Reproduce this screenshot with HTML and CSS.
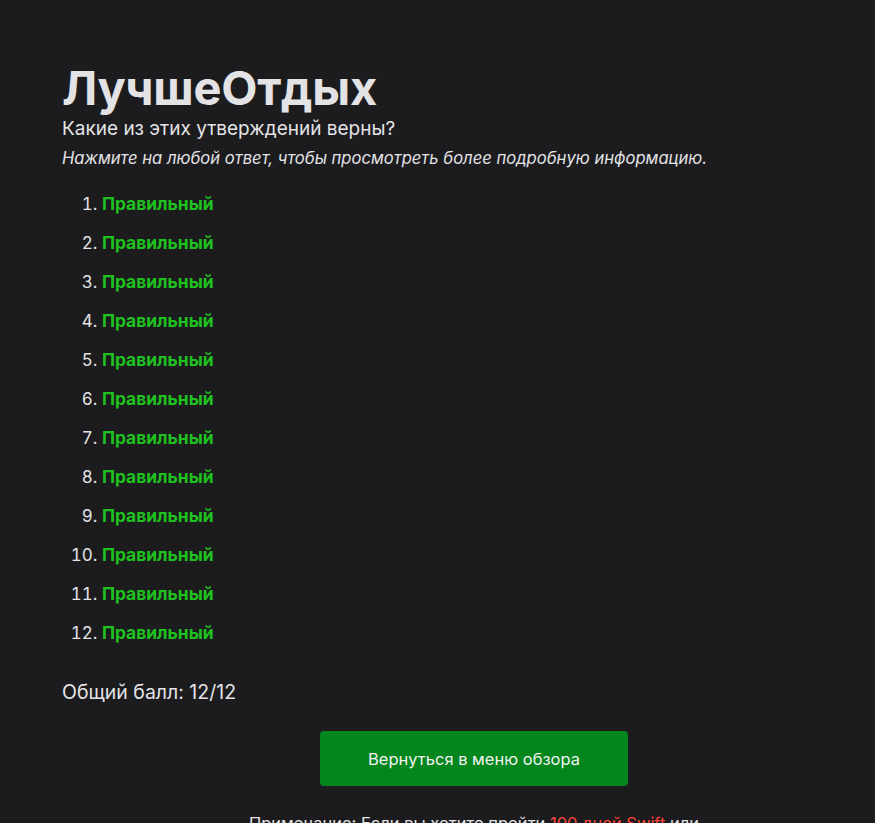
FILE: index.html
```html
<!DOCTYPE html>
<html lang="ru">
<head>
<meta charset="utf-8">
<title>ЛучшеОтдых</title>
<link rel="stylesheet" href="styles.css">
</head>
<body>
<main class="page">
  <h1 class="title">ЛучшеОтдых</h1>
  <p class="question">Какие из этих утверждений верны?</p>
  <p class="hint">Нажмите на любой ответ, чтобы просмотреть более подробную информацию.</p>
  <ol class="answers">
    <li><a class="correct">Правильный</a></li>
    <li><a class="correct">Правильный</a></li>
    <li><a class="correct">Правильный</a></li>
    <li><a class="correct">Правильный</a></li>
    <li><a class="correct">Правильный</a></li>
    <li><a class="correct">Правильный</a></li>
    <li><a class="correct">Правильный</a></li>
    <li><a class="correct">Правильный</a></li>
    <li><a class="correct">Правильный</a></li>
    <li><a class="correct">Правильный</a></li>
    <li><a class="correct">Правильный</a></li>
    <li><a class="correct">Правильный</a></li>
  </ol>
  <p class="score">Общий балл: 12/12</p>
  <div class="actions">
    <button class="btn">Вернуться в меню обзора</button>
  </div>
  <p class="note">Примечание: Если вы хотите пройти <a class="link">100 дней Swift</a> или поделиться результатом с друзьями, нажмите сюда.</p>
</main>
</body>
</html>
```
FILE: styles.css
```css
html { overflow: hidden; }
body {
  margin: 0;
  background: #1c1c1e;
  color: #e3e3e6;
  font-family: Inter, "Noto Sans", sans-serif;
}
.page {
  width: 824px;
  padding: 60px 0 0 62px;
  box-sizing: content-box;
}
.title {
  font-size: 47px;
  font-weight: 700;
  margin: 0;
  line-height: 56px;
  letter-spacing: -0.2px;
}
.question {
  font-size: 19px;
  margin: 0;
  line-height: 26px;
}
.hint {
  font-size: 16.6px;
  font-style: italic;
  margin: 4px 0 0;
  line-height: 24px;
}
.answers {
  margin: 22px 0 0;
  padding-left: 40px;
  font-size: 17px;
  line-height: 24px;
}
.answers li { margin-bottom: 15px; }
.correct {
  color: #1fc11f;
  font-weight: 700;
  font-size: 17.4px;
}
.score {
  font-size: 19.5px;
  margin: 34px 0 0;
  line-height: 26px;
}
.actions {
  display: flex;
  justify-content: center;
  margin-top: 26px;
}
.btn {
  width: 308px;
  height: 55px;
  background: #03861c;
  color: #f2f2f2;
  border: none;
  border-radius: 4px;
  font-family: inherit;
  font-size: 16.5px;
}
.note {
  max-width: 470px;
  margin: 25px auto 0;
  text-align: center;
  font-size: 16.5px;
  line-height: 24px;
}
.link { color: #ff453a; }
```
